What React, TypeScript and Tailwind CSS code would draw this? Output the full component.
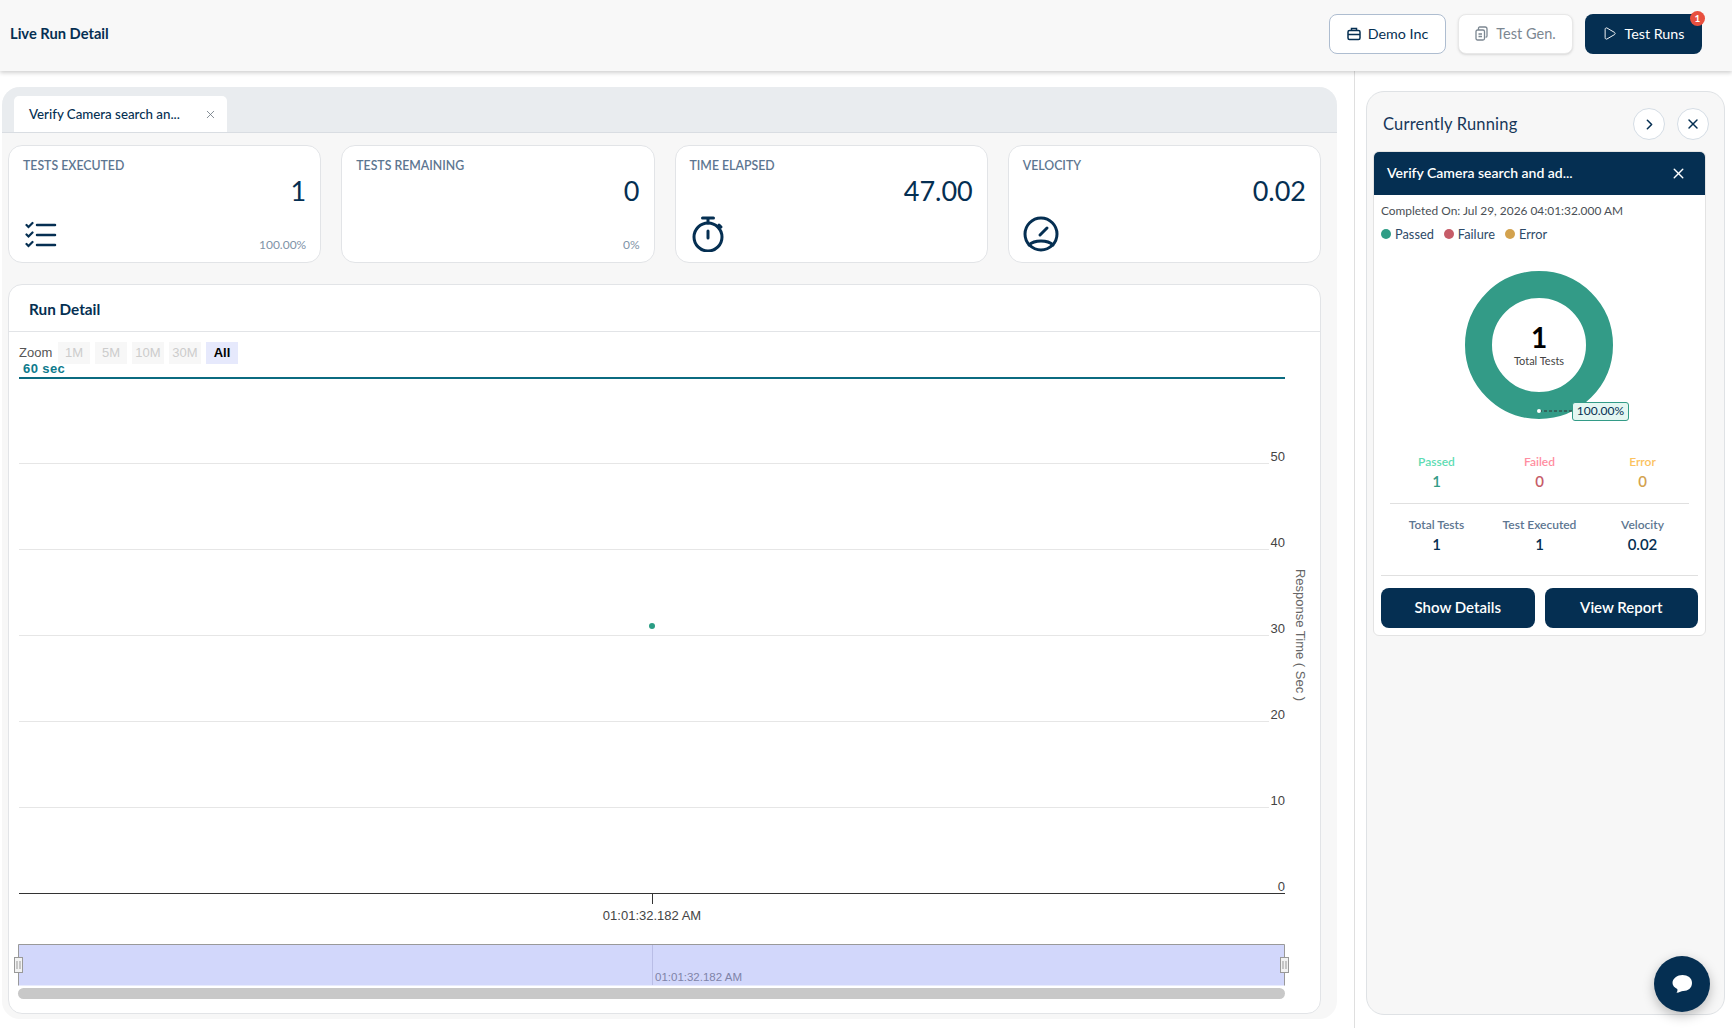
import { ChevronRight, Play, X } from "lucide-react";

const NAVY = "#052f52";

type Stat = { label: string; value: string; note?: string; icon?: "list" | "timer" | "gauge" };

const stats: Stat[] = [
  { label: "Tests Executed", value: "1", note: "100.00%", icon: "list" },
  { label: "Tests Remaining", value: "0", note: "0%" },
  { label: "Time Elapsed", value: "47.00", icon: "timer" },
  { label: "Velocity", value: "0.02", icon: "gauge" },
];

const gridLines = [
  { y: 97, label: "50" },
  { y: 183, label: "40" },
  { y: 269, label: "30" },
  { y: 355, label: "20" },
  { y: 441, label: "10" },
];

function StatIcon({ icon }: { icon?: Stat["icon"] }) {
  if (icon === "list") {
    return (
      <svg width="32" height="28" viewBox="0 0 32 28" fill="none" stroke={NAVY} strokeLinecap="round">
        <path d="M1.500 4 3.500 6 7.500 2M1.500 13.500 3.500 15.500 7.500 11.500M1.500 23 3.500 25 7.500 21" strokeWidth="2.200" />
        <path d="M12 4h18M12 14h18M12 24h18" strokeWidth="2.500" />
      </svg>
    );
  }
  if (icon === "timer") {
    return (
      <svg width="36" height="36" viewBox="0 0 36 36" fill="none" stroke={NAVY} strokeWidth="3" strokeLinecap="round">
        <circle cx="18" cy="21" r="14" />
        <path d="M12.500 2h11M18 2v5M18 15v7M29 9l2 2" />
      </svg>
    );
  }
  if (icon === "gauge") {
    return (
      <svg width="36" height="36" viewBox="0 0 36 36" fill="none" stroke={NAVY} strokeWidth="3" strokeLinecap="round">
        <circle cx="18" cy="18" r="16" />
        <path d="M17 19 24 12M6 29c3-3 8-4 12-4s9 1 12 4" />
      </svg>
    );
  }
  return <div className="h-[36px]" />;
}

function StatCard({ stat }: { stat: Stat }) {
  return (
    <div className="h-[118px] rounded-[14px] border border-[#e2e4e7] bg-white px-[14px] pt-[11px]">
      <div className="text-[12.300px] leading-[18px] font-semibold text-[#5d7691] uppercase">{stat.label}</div>
      <div className="mt-[-1px] text-right text-[27px] leading-[34px] text-[#052f52]">{stat.value}</div>
      <div className="mt-[4px] flex h-[40px] items-end justify-between">
        <div className={stat.icon === "list" ? "mb-[3px] ml-[2px]" : "ml-0"}>
          <StatIcon icon={stat.icon} />
        </div>
        <div className="mb-[-1px] text-xs leading-4 text-[#8093a7]">{stat.note}</div>
      </div>
    </div>
  );
}

function ZoomButtons() {
  return (
    <div className="flex h-[22px] items-center pl-[10px] font-['Liberation_Sans',sans-serif] text-[13px]">
      <span className="w-[39px] text-[#555]">Zoom</span>
      <div className="flex gap-[5px]">
        {["1M", "5M", "10M", "30M"].map((range) => (
          <span key={range} className="flex h-[22px] w-[32px] items-center justify-center bg-[#f7f7f7] text-[#ccc]">
            {range}
          </span>
        ))}
        <span className="flex h-[22px] w-[32px] items-center justify-center bg-[#e6e9fc] font-bold text-black">All</span>
      </div>
    </div>
  );
}

function ResponseChart() {
  return (
    <svg width="1311" height="640" className="mt-[2px] overflow-visible font-['Liberation_Sans',sans-serif]">
      <text x="14" y="7" fontSize="13" fontWeight="700" letterSpacing="0.4" fill="#0d7a8c">60 sec</text>
      <rect x="10" y="11" width="1266" height="2" fill="#0b6b80" />
      {gridLines.map((line) => (
        <g key={line.label}>
          <rect x="10" y={line.y} width="1250" height="1" fill="#e6e6e6" />
          <text x="1276" y={line.y - 2} fontSize="13" textAnchor="end" fill="#444">{line.label}</text>
        </g>
      ))}
      <text x="1276" y="525" fontSize="13" textAnchor="end" fill="#444">0</text>
      <rect x="10" y="527" width="1266" height="1" fill="#333" />
      <rect x="643" y="527" width="1" height="11" fill="#333" />
      <text x="643" y="554" fontSize="13" textAnchor="middle" fill="#444">01:01:32.182 AM</text>
      <circle cx="643" cy="260" r="3" fill="#2a9d84" />
      <text transform="translate(1287 269) rotate(90)" fontSize="13" textAnchor="middle" fill="#666">
        Response Time ( Sec )
      </text>

      <rect x="9.500" y="578.500" width="1266" height="41" fill="#d2d7fb" />
      <path d="M9.500 619.500V578.500H1275.500V619.500" fill="none" stroke="#999" />
      <rect x="643" y="579" width="1" height="40" fill="#b9bde6" />
      <text x="646" y="615" fontSize="11.500" fill="#7f83a8">01:01:32.182 AM</text>
      {[9.5, 1275.5].map((x) => (
        <g key={x}>
          <rect x={x - 4} y="591.500" width="8" height="15" fill="#f2f2f2" stroke="#999" />
          <path d={`M${x - 1.5} 595v8M${x + 1.5} 595v8`} stroke="#999" />
        </g>
      ))}
      <rect x="9" y="622" width="1267" height="11" rx="5.500" fill="#c8c8c8" />
    </svg>
  );
}

function Donut() {
  return (
    <svg width="200" height="156" viewBox="0 0 200 156" className="font-['Lato',sans-serif]">
      <circle cx="75" cy="77" r="60.500" fill="none" stroke="#339b87" strokeWidth="27" />
      <text x="75" y="80" fontSize="28" fontWeight="700" textAnchor="middle" fill="#000">1</text>
      <text x="75" y="97" fontSize="11" textAnchor="middle" fill="#444">Total Tests</text>
      <path d="M75 143h34" stroke="#333" strokeDasharray="3 2" />
      <circle cx="75" cy="143" r="2" fill="#fff" />
      <rect x="108.500" y="134.500" width="56" height="18" rx="2.500" fill="#e4f6f1" stroke="#339b87" />
      <text x="136.500" y="147" fontSize="12" textAnchor="middle" fill="#052f52">100.00%</text>
    </svg>
  );
}

function MiniStat({ label, value, labelClass, valueClass }: { label: string; value: string; labelClass: string; valueClass: string }) {
  return (
    <div className="text-center">
      <div className={`text-xs leading-[18px] font-semibold ${labelClass}`}>{label}</div>
      <div className={`text-[15px] leading-[20px] font-semibold ${valueClass}`}>{value}</div>
    </div>
  );
}

function RunSummary() {
  return (
    <div className="ml-[6px] h-[485px] w-[333px] overflow-hidden rounded-[6px] border border-[#e3e3e3] bg-white">
      <div className="mt-[-1px] flex h-[44px] items-center justify-between bg-[#052f52] pr-[18px] pl-[13px] text-white">
        <span className="text-sm font-semibold">Verify Camera search and ad...</span>
        <X size={17} strokeWidth={2} />
      </div>
      <div className="px-[7px] pt-[7px]">
        <div className="text-[11.900px] leading-[18px] text-[#4a4f55]">Completed On: Jul 29, 2026 04:01:32.000 AM</div>
        <div className="mt-[5px] flex items-center text-[12.800px] leading-[18px] text-[#2d4a68]">
          <span className="mr-[4px] size-[10px] rounded-full bg-[#2f9d86]" />
          <span className="mr-[10px]">Passed</span>
          <span className="mr-[4px] size-[10px] rounded-full bg-[#c65c68]" />
          <span className="mr-[10px]">Failure</span>
          <span className="mr-[4px] size-[10px] rounded-full bg-[#d3a24e]" />
          <span>Error</span>
        </div>
      </div>
      <div className="mt-[25px] pl-[90px]">
        <Donut />
      </div>
      <div className="mx-[11px] mt-[29px] grid grid-cols-3">
        <MiniStat label="Passed" value="1" labelClass="text-[#5edcb3]" valueClass="text-[#339b87]" />
        <MiniStat label="Failed" value="0" labelClass="text-[#ff8da0]" valueClass="text-[#c65c68]" />
        <MiniStat label="Error" value="0" labelClass="text-[#fbc25e]" valueClass="text-[#d3a24e]" />
      </div>
      <div className="mx-[16px] mt-[12px] border-t border-[#e0e0e0]" />
      <div className="mx-[11px] mt-[12px] grid grid-cols-3">
        <MiniStat label="Total Tests" value="1" labelClass="text-[#5d7691]" valueClass="text-[#052f52]" />
        <MiniStat label="Test Executed" value="1" labelClass="text-[#5d7691]" valueClass="text-[#052f52]" />
        <MiniStat label="Velocity" value="0.02" labelClass="text-[#5d7691]" valueClass="text-[#052f52]" />
      </div>
      <div className="mx-[7px] mt-[21px] border-t border-[#e0e0e0]" />
      <div className="mx-[7px] mt-[12px] grid grid-cols-2 gap-[10px]">
        <button className="h-[40px] rounded-[8px] bg-[#052f52] pb-[1px] text-[15px] font-semibold text-white">Show Details</button>
        <button className="h-[40px] rounded-[8px] bg-[#052f52] pb-[1px] text-[15px] font-semibold text-white">View Report</button>
      </div>
    </div>
  );
}

export default function App() {
  return (
    <div className="relative flex h-screen flex-col overflow-hidden bg-white font-['Lato',sans-serif] text-[#052f52]">
      <header className="relative z-10 flex h-[71px] shrink-0 items-center justify-between bg-[#f8f8f8] pr-[30px] pb-[3px] pl-[10px] shadow-[0_2px_4px_rgba(0,0,0,0.18)]">
        <h1 className="mb-[1px] text-[14.700px] font-bold">Live Run Detail</h1>
        <div className="flex gap-[12px]">
          <button className="flex h-[40px] w-[117px] items-center justify-center gap-[7px] rounded-[8px] border border-[#aebdd0] bg-white pb-[1px] text-[14.300px]">
            <svg width="14" height="14" viewBox="0 0 14 14" fill="none" stroke={NAVY} strokeWidth="1.500">
              <rect x="1" y="3.500" width="12" height="9" rx="1.500" />
              <path d="M4.500 3.500V1.500h5v2M1 7.500h12M6 7.500h2" />
            </svg>
            Demo Inc
          </button>
          <button className="flex h-[40px] w-[115px] items-center justify-center gap-[8px] rounded-[8px] border border-[#e8e8e8] bg-white pb-[1px] text-[14.500px] text-[#7c8791] shadow-sm">
            <svg width="13" height="15" viewBox="0 0 13 15" fill="none" stroke="#7c8791" strokeWidth="1.300">
              <rect x="1" y="4" width="8.500" height="10" rx="1.500" />
              <path d="M3.500 4V2.200C3.500 1.500 4 1 4.700 1H10c1 0 2 .9 2 2v7c0 .7-.6 1.200-1.500 1.200M3.500 8h3.500M3.500 10.500h3.500" />
            </svg>
            Test Gen.
          </button>
          <button className="relative flex h-[40px] w-[117px] items-center justify-center gap-[7px] rounded-[8px] bg-[#052f52] pb-[1px] text-[14.300px] text-white">
            <Play size={15} strokeWidth={1.500} />
            Test Runs
            <span className="absolute top-[-3px] right-[-3px] flex size-[15px] items-center justify-center rounded-full bg-[#e8503f] text-[10px] font-bold">
              1
            </span>
          </button>
        </div>
      </header>

      <div className="flex min-h-0 flex-1">
        <div className="w-[1354px] shrink-0 pt-[16px] pl-[2px]">
          <main className="h-[932px] w-[1335px] overflow-hidden rounded-[18px] bg-[#f7f7f7]">
            <div className="flex h-[46px] items-end border-b border-[#d9dde2] bg-[#e9ecef] pl-[12px]">
              <div className="flex h-[36px] w-[213px] items-center justify-between rounded-t-[5px] bg-white pt-[1px] pr-[10px] pl-[15px]">
                <span className="text-[13.300px] font-medium">Verify Camera search an...</span>
                <X size={13} strokeWidth={1.500} className="text-[#6b7680]" />
              </div>
            </div>
            <div className="px-[6px] pt-[12px]">
              <div className="grid w-[1313px] grid-cols-4 gap-[20px]">
                {stats.map((stat) => (
                  <StatCard key={stat.label} stat={stat} />
                ))}
              </div>
              <section className="mt-[21px] h-[730px] w-[1313px] rounded-[14px] border border-[#e2e4e7] bg-white">
                <div className="flex h-[47px] items-center border-b border-[#e2e4e7] pt-[2px] pl-[20px] text-[15.300px] font-bold">Run Detail</div>
                <div className="pt-[10px]">
                  <ZoomButtons />
                  <ResponseChart />
                </div>
              </section>
            </div>
          </main>
        </div>

        <aside className="flex-1 border-l border-[#dfdfdf] pt-[20px] pl-[11px]">
          <div className="h-[924px] w-[359px] rounded-[18px] border border-[#dfe2e5] bg-[#f7f7f7]">
            <div className="flex h-[59px] items-center justify-between pt-[5px] pr-[15px] pl-[16px]">
              <h2 className="text-[16.500px] font-normal tracking-[0.2px] text-[#17375a]">Currently Running</h2>
              <div className="flex gap-[12px]">
                <button className="flex size-[32px] items-center justify-center rounded-full border border-[#d5dde5] bg-white">
                  <ChevronRight size={17} strokeWidth={2.200} />
                </button>
                <button className="flex size-[32px] items-center justify-center rounded-full border border-[#d5dde5] bg-white">
                  <X size={16} strokeWidth={2.200} />
                </button>
              </div>
            </div>
            <RunSummary />
          </div>
        </aside>
      </div>

      <button className="absolute right-[22px] bottom-[16px] flex size-[56px] items-center justify-center rounded-full bg-[#052f52] shadow-[0_4px_12px_rgba(0,0,0,0.25)]">
        <svg width="22" height="22" viewBox="0 0 22 22" fill="#fff">
          <path d="M11.500 2C16.500 2 21 4.800 21 10s-4.500 8.200-9 8c-1.500 0-3.500 1.700-6.500 1.800C6.500 18.500 6.700 17 6.200 16 3.500 14.700 1.500 12.500 1.500 10c0-4.700 5-8 10-8Z" />
        </svg>
      </button>
    </div>
  );
}
